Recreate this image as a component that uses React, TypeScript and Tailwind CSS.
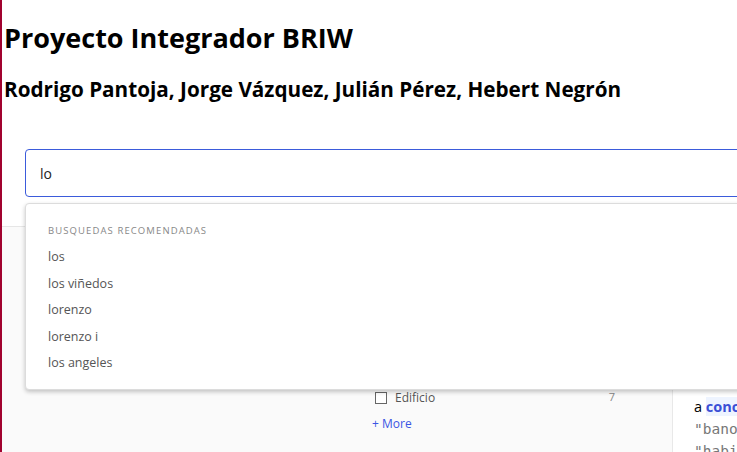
import React from "react";

const suggestions = ["los", "los viñedos", "lorenzo", "lorenzo i", "los angeles"];

const facets = [
  { label: "Casa", count: 41 },
  { label: "Departamento", count: 23 },
  { label: "Terreno", count: 12 },
  { label: "Edificio", count: 7 },
];

function FacetRow({ label, count }: { label: string; count: number }) {
  return (
    <label className="flex h-[25px] items-center text-[12px] text-[#555]">
      <span className="ml-[3px] h-[12px] w-[12px] border border-[#666] bg-white" />
      <span className="ml-[8px] flex-1">{label}</span>
      <span className="mr-[57px] text-[11px] text-[#888]">{count}</span>
    </label>
  );
}

const mono = { fontFamily: '"DejaVu Sans Mono", monospace' };

export default function App() {
  return (
    <div
      className="relative h-[452px] overflow-hidden border-l-2 border-[#a1022f] bg-white"
      style={{ fontFamily: '"Open Sans", "Noto Sans", sans-serif' }}
    >
      <div className="w-[1280px]">
        <header className="pl-[2px] pt-[19px]">
          <h1 className="text-[27px] font-bold leading-[38px] text-black">Proyecto Integrador BRIW</h1>
          <h2 className="mt-[18px] text-[20.7px] font-bold leading-[28px] text-black">
            Rodrigo Pantoja, Jorge Vázquez, Julián Pérez, Hebert Negrón
          </h2>
        </header>

        <div className="relative mt-[46px] px-[23px]">
          <div className="flex h-[48px] items-center rounded-[4px] border border-[#3b5bdb] bg-white pl-[14px] text-[14px] text-[#222]">
            lo
          </div>

          <div className="absolute left-[23px] right-[23px] top-[54px] z-10 rounded-[4px] border border-[#dcdcdc] bg-white pb-[12px] pt-[20px] shadow-[0_2px_4px_rgba(0,0,0,0.22)]">
            <p className="pl-[22px] text-[9.5px] uppercase leading-[14px] tracking-[1.1px] text-[#888]">
              Busquedas recomendadas
            </p>
            <ul className="mt-[6px]">
              {suggestions.map((s) => (
                <li key={s} className="h-[26.5px] pl-[22px] text-[12.5px] leading-[26.5px] text-[#555]">
                  {s}
                </li>
              ))}
            </ul>
          </div>
        </div>

        <main className="mt-[29px] grid h-[300px] grid-cols-[370px_300px_1fr] border-t border-[#e6e6e6] bg-[#fafafa]">
          <div />
          <aside className="pt-[83px]">
            {facets.map((f) => (
              <FacetRow key={f.label} {...f} />
            ))}
            <button className="mt-[2px] text-[12px] text-[#3a56e4]">+ More</button>
          </aside>
          <section className="border-l border-[#e8e8e8] bg-white pl-[21px] pt-[147px] text-[14.5px] leading-[22px]">
            <p className="text-[#777]" style={mono}>
              "descripcion":
            </p>
            <p className="text-black">
              a <span className="bg-[#eef4ff] font-bold text-[#3a4fd6]">conocer</span> la propiedad
            </p>
            <p className="text-[#777]" style={mono}>
              "banos": 2
            </p>
            <p className="text-[#777]" style={mono}>
              "habitaciones": 3
            </p>
          </section>
        </main>
      </div>
    </div>
  );
}
